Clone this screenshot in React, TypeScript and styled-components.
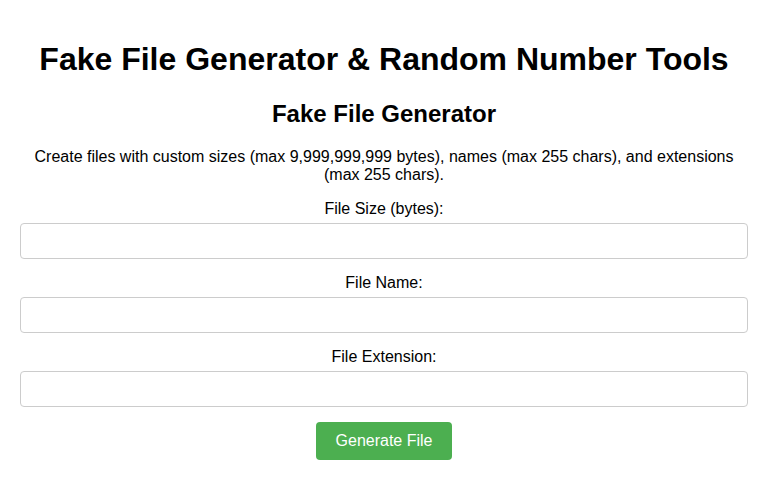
import React from "react";
import styled, { createGlobalStyle } from "styled-components";

const Global = createGlobalStyle`
  html, body { margin: 0; padding: 0; background: #fff; }
  body { font-family: "Liberation Sans", Arial, sans-serif; color: #000; }
  * { box-sizing: border-box; }
`;

const Page = styled.div`
  padding: 20px;
  text-align: center;
`;

const Title = styled.h1`
  font-size: 32px;
  font-weight: bold;
  margin: 21.44px 0;
`;

const SectionTitle = styled.h2`
  font-size: 24px;
  font-weight: bold;
  margin: 19.92px 0;
`;

const Description = styled.p`
  font-size: 16px;
  margin: 16px 0;
`;

const Form = styled.form`
  display: flex;
  flex-direction: column;
  align-items: stretch;
`;

const Label = styled.label`
  display: block;
  font-size: 16px;
`;

const Input = styled.input`
  display: block;
  width: 100%;
  height: 36px;
  margin: 5px 0 15px;
  padding: 8px;
  font-size: 16px;
  font-family: inherit;
  border: 1px solid #ccc;
  border-radius: 4px;
  background: #fff;
`;

const Button = styled.button`
  align-self: center;
  background: #4caf50;
  color: #fff;
  border: none;
  border-radius: 4px;
  padding: 10px 20px;
  font-size: 16px;
  font-family: inherit;
  cursor: pointer;
`;

export default function App() {
  return (
    <>
      <Global />
      <Page>
        <Title>Fake File Generator &amp; Random Number Tools</Title>
        <SectionTitle>Fake File Generator</SectionTitle>
        <Description>
          Create files with custom sizes (max 9,999,999,999 bytes), names (max 255 chars), and extensions (max 255 chars).
        </Description>
        <Form onSubmit={(e) => e.preventDefault()}>
          <Label>File Size (bytes):</Label>
          <Input type="text" />
          <Label>File Name:</Label>
          <Input type="text" />
          <Label>File Extension:</Label>
          <Input type="text" />
          <Button type="submit">Generate File</Button>
        </Form>
      </Page>
    </>
  );
}
